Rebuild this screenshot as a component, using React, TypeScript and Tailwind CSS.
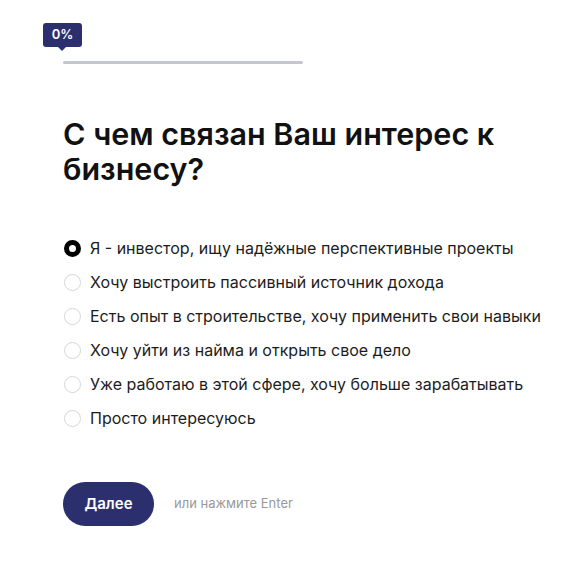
import { useState } from "react";

const options = [
  "Я - инвестор, ищу надёжные перспективные проекты",
  "Хочу выстроить пассивный источник дохода",
  "Есть опыт в строительстве, хочу применить свои навыки",
  "Хочу уйти из найма и открыть свое дело",
  "Уже работаю в этой сфере, хочу больше зарабатывать",
  "Просто интересуюсь",
];

const App = () => {
  const [selected, setSelected] = useState(0);

  return (
    <div className="min-h-screen bg-white font-['Inter',sans-serif] text-[#111]">
      <div className="pl-[63px] pr-6 pt-[23px]">
        {/* progress */}
        <div className="relative h-[41px] w-[240px]">
          <div className="absolute left-[-20px] top-0 flex h-[24px] w-[39px] items-center justify-center rounded-[3px] bg-[#2c2f6e] text-[13px] font-semibold text-white">
            0%
            <span className="absolute bottom-[-4px] left-[15px] h-0 w-0 border-x-[4px] border-t-[4px] border-x-transparent border-t-[#2c2f6e]" />
          </div>
          <div className="absolute bottom-0 left-0 h-[3px] w-full rounded-full bg-[#c6c6d3]" />
        </div>

        <h1 className="mt-[52px] text-[30.5px] font-semibold leading-[35px]">
          С чем связан Ваш интерес к
          <br />
          бизнесу?
        </h1>

        <div className="mt-[52px] flex flex-col gap-[14px]">
          {options.map((o, i) => (
            <label
              key={o}
              className="flex h-[20px] cursor-pointer items-center gap-[9px] text-[16px] text-[#1c1c1c]"
              onClick={() => setSelected(i)}
            >
              <span
                className={
                  i === selected
                    ? "ml-[1px] h-[17px] w-[17px] shrink-0 rounded-full border-[5px] border-black bg-white"
                    : "ml-[1px] h-[17px] w-[17px] shrink-0 rounded-full border-[1.5px] border-[#d6d6d6] bg-white"
                }
              />
              {o}
            </label>
          ))}
        </div>

        <div className="mt-[54px] flex items-center gap-5">
          <button className="h-[44px] w-[91px] rounded-full bg-[#2c2f6e] text-[15px] font-semibold text-white">
            Далее
          </button>
          <span className="text-[13px] text-[#999]">или нажмите Enter</span>
        </div>
      </div>
    </div>
  );
};

export default App;
